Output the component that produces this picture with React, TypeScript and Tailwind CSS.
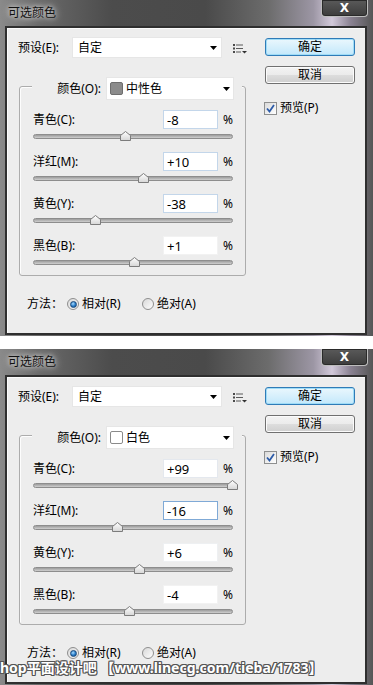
import React from 'react';

type SliderRow = { label: string; value: string; v: number; border: string };
type DialogData = {
  colorName: string;
  swatch: string;
  rows: SliderRow[];
  watermark?: boolean;
};

const dialogs: DialogData[] = [
  {
    colorName: '中性色',
    swatch: 'bg-[#8b8b8b] border-[#6e6e6e]',
    rows: [
      { label: '青色(C):', value: '-8', v: -8, border: 'border-[#c3d6ea]' },
      { label: '洋红(M):', value: '+10', v: 10, border: 'border-[#c3d6ea]' },
      { label: '黄色(Y):', value: '-38', v: -38, border: 'border-[#c3d6ea]' },
      { label: '黑色(B):', value: '+1', v: 1, border: 'border-[#f2f2f2]' },
    ],
  },
  {
    colorName: '白色',
    swatch: 'bg-white border-[#8a8a8a]',
    rows: [
      { label: '青色(C):', value: '+99', v: 99, border: 'border-[#e4e8ee]' },
      { label: '洋红(M):', value: '-16', v: -16, border: 'border-[#7fa9d6]' },
      { label: '黄色(Y):', value: '+6', v: 6, border: 'border-[#eef0f2]' },
      { label: '黑色(B):', value: '-4', v: -4, border: 'border-[#f2f2f2]' },
    ],
    watermark: true,
  },
];

function Arrow() {
  return (
    <svg width="7" height="4" viewBox="0 0 7 4" className="shrink-0">
      <path d="M0 0H7L3.5 4Z" fill="#000" />
    </svg>
  );
}

function MenuIcon() {
  return (
    <svg width="14" height="10" viewBox="0 0 14 10" className="shrink-0">
      <rect x="0" y="0" width="2" height="2" fill="#4a4a4a" />
      <rect x="3" y="0.5" width="7" height="1" fill="#5a5a5a" />
      <rect x="0" y="3.5" width="2" height="2" fill="#4a4a4a" />
      <rect x="3" y="4" width="7" height="1" fill="#5a5a5a" />
      <rect x="0" y="7" width="2" height="2" fill="#4a4a4a" />
      <rect x="3" y="7.5" width="5" height="1" fill="#5a5a5a" />
      <path d="M9 7H14L11.5 9.5Z" fill="#333" />
    </svg>
  );
}

function Thumb({ v }: { v: number }) {
  return (
    <svg
      width="11"
      height="10"
      viewBox="0 0 11 10"
      className="absolute top-[2px]"
      style={{ left: v + 100 - 5.5 }}
    >
      <defs>
        <linearGradient id="tg" x1="0" y1="0" x2="0" y2="1">
          <stop offset="0" stopColor="#ffffff" />
          <stop offset="1" stopColor="#d6d6d6" />
        </linearGradient>
      </defs>
      <path d="M0.5 4.5L5.5 0.5L10.5 4.5V9.5H0.5Z" fill="url(#tg)" stroke="#7c7c7c" strokeWidth="1" />
    </svg>
  );
}

function Radio({ checked }: { checked: boolean }) {
  return (
    <div className="w-[12px] h-[12px] rounded-full border border-[#8e8e8e] bg-[linear-gradient(135deg,#d8d8d8,#fdfdfd)] flex items-center justify-center shrink-0">
      {checked ? (
        <div className="w-[7px] h-[7px] rounded-full border border-[#1c4a7a] bg-[radial-gradient(circle_at_40%_35%,#a8dcff,#2579c6_55%,#0f4b8c)]" />
      ) : null}
    </div>
  );
}

function Dialog({ data }: { data: DialogData }) {
  return (
    <div className="relative w-[373px] h-[336px] flex flex-col bg-[linear-gradient(90deg,#8a8a8a_0%,#6a6a6a_10%,#4c4c4c_30%,#4a4a4a_55%,#6c6c6c_72%,#9c96a4_84%,#d2c9da_89%,#8a8292_94%,#555_100%)]">
      <div className="h-[26px] flex items-start shrink-0">
        <span className="ml-[8px] mt-[5px] text-[12px] leading-[16px] text-[#111] [text-shadow:0_0_8px_rgba(255,255,255,0.9),0_0_4px_rgba(255,255,255,0.7)]">
          可选颜色
        </span>
        <div className="flex-1" />
        <div className="mr-[5px] w-[47px] h-[17px] rounded-b-[4px] border border-t-0 border-[#bdbdbd] shadow-[inset_0_0_0_1px_#2a2a2a] bg-[linear-gradient(#5a5a5a,#3c3c3c)] flex items-center justify-center text-white font-bold text-[12px] leading-none font-['DejaVu_Sans',sans-serif]">
          X
        </div>
      </div>
      <div className="flex-1 pl-[5px] pr-[6px] pb-[1px] flex">
        <div className="flex-1 border-2 border-[#2f2f2f] bg-[#ededed] shadow-[inset_1px_1px_0_#fbfbfb] flex">
          <div className="w-[251px] pl-[11px] pt-[9px] flex flex-col">
            <div className="flex items-center h-[21px]">
              <span className="w-[54px] leading-[16px]">预设(E):</span>
              <div className="w-[150px] h-[21px] bg-white border border-[#e6e6e6] flex items-center justify-between pl-[5px] pr-[4px]">
                <span className="leading-[16px]">自定</span>
                <Arrow />
              </div>
              <div className="ml-[11px] mt-[3px]">
                <MenuIcon />
              </div>
            </div>

            <div className="mt-[28px] ml-[1px] w-[227px] border border-[#acacac] rounded-[3px] shadow-[inset_1px_1px_0_#fdfdfd]">
              <div className="-mt-[10px] ml-[12px] w-[210px] h-[23px] bg-[#ededed] flex items-center justify-end pr-[8px] gap-[5px]">
                <span className="leading-[16px]">颜色(O):</span>
                <div className="w-[128px] h-[23px] bg-white border border-[#e6e6e6] flex items-center pl-[3px] pr-[3px]">
                  <div className={`w-[13px] h-[13px] rounded-[2px] border ${data.swatch}`} />
                  <span className="ml-[3px] leading-[16px] flex-1">{data.colorName}</span>
                  <Arrow />
                </div>
              </div>
              <div className="pl-[13px] pr-[12px] pt-[10px] pb-[7px]">
                {data.rows.map((r, i) => (
                  <div key={i} className={i === 0 ? '' : 'mt-[10px]'}>
                    <div className="flex items-center h-[19px]">
                      <span className="flex-1 leading-[16px]">{r.label}</span>
                      <div className={`w-[55px] h-[19px] bg-white border ${r.border} flex items-center pl-[3px] text-[13px] leading-[16px]`}>
                        {r.value}
                      </div>
                      <span className="ml-[5px] w-[10px] text-right leading-[16px]">%</span>
                    </div>
                    <div className="relative h-[13px] pt-[5px]">
                      <div className="h-[5px] rounded-full border border-[#8d8d8d] bg-[linear-gradient(#9c9c9c,#cfcfcf)]" />
                      <Thumb v={r.v} />
                    </div>
                  </div>
                ))}
              </div>
            </div>

            <div className="mt-[20px] ml-[9px] h-[16px] flex items-center">
              <span className="w-[40px] leading-[14px]">方法：</span>
              <div className="w-[75px] flex items-center gap-[3px]">
                <Radio checked />
                <span className="leading-[14px]">相对(R)</span>
              </div>
              <div className="flex items-center gap-[3px]">
                <Radio checked={false} />
                <span className="leading-[14px]">绝对(A)</span>
              </div>
            </div>
          </div>

          <div className="pl-[7px] pt-[10px] flex flex-col">
            <div className="w-[90px] h-[18px] rounded-[3px] border border-[#2f7bb7] shadow-[inset_0_0_0_1px_#9fdcf7] bg-[linear-gradient(#eaf7fd,#c3e8fb)] flex items-center justify-center leading-[16px]">
              确定
            </div>
            <div className="mt-[10px] w-[90px] h-[18px] rounded-[3px] border border-[#707070] shadow-[inset_0_0_0_1px_#fbfbfb] bg-[linear-gradient(#f3f3f3_0%,#ebebeb_50%,#dddddd_51%,#cfcfcf_100%)] flex items-center justify-center leading-[16px]">
              取消
            </div>
            <div className="mt-[16px] -ml-[1px] flex items-center gap-[3px]">
              <div className="w-[13px] h-[13px] border border-[#8e8f8f] bg-[linear-gradient(135deg,#dadada,#ffffff)] flex items-center justify-center">
                <svg width="9" height="9" viewBox="0 0 9 9">
                  <path d="M1 4.5L3.5 7.5L8 1" stroke="#2c5ba8" strokeWidth="1.8" fill="none" />
                </svg>
              </div>
              <span className="leading-[16px]">预览(P)</span>
            </div>
          </div>
        </div>
      </div>
      {data.watermark ? (
        <div className="absolute left-0 top-[312px] whitespace-nowrap text-[14px] leading-[13px] font-bold text-white [text-shadow:-1px_0_#555,1px_0_#555,0_-1px_#555,0_1px_#555,-1px_-1px_#555,1px_1px_#555,-1px_1px_#555,1px_-1px_#555]">
          hop平面设计吧 【www.linecg.com/tieba/1783】
        </div>
      ) : null}
    </div>
  );
}

export default function App() {
  return (
    <div className="w-[373px] h-[685px] bg-white overflow-hidden font-['Noto_Sans','Noto_Sans_CJK_SC',sans-serif] text-[12px] text-black">
      <Dialog data={dialogs[0]} />
      <div className="h-[13px]" />
      <Dialog data={dialogs[1]} />
    </div>
  );
}
